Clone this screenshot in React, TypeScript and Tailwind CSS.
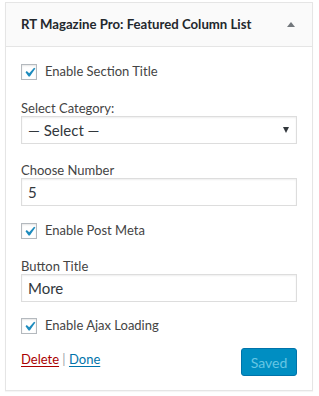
const font = { fontFamily: 'Lato, "Open Sans", sans-serif' }

function Check({ label }: { label: string }) {
  return (
    <label className="flex items-center h-4">
      <span className="relative w-4 h-4 border border-[#b4b9be] bg-white shadow-[inset_0_1px_2px_rgba(0,0,0,0.1)]">
        <svg viewBox="0 0 20 20" className="absolute -left-[2px] -top-[2px] w-[19px] h-[19px] text-[#1e8cbe]" fill="currentColor">
          <path d="M14.83 4.89l1.34.94-5.81 8.38H9.02L5.78 9.67l1.34-1.25 2.57 2.4z" />
        </svg>
      </span>
      <span className="ml-2 text-[13px] text-[#444]">{label}</span>
    </label>
  )
}

function Field({ label, value }: { label: string; value: string }) {
  return (
    <div>
      <div className="text-[13px] text-[#444] leading-4">{label}</div>
      <div className="h-7 border border-[#ddd] bg-white flex items-center px-[6px] text-[15px] text-[#32373c] shadow-[inset_0_1px_2px_rgba(0,0,0,0.07)]">
        {value}
      </div>
    </div>
  )
}

export default function App() {
  return (
    <div className="w-[319px] h-[396px] bg-white pt-[2px] pl-[5px]" style={font}>
      <div className="w-[308px] border border-[#e5e5e5] shadow-[0_1px_1px_rgba(0,0,0,0.04)]">
        {/* Header */}
        <div className="h-[44px] bg-[#fafafa] border-b border-[#e5e5e5] flex items-center justify-between pl-[15px] pr-[17px]">
          <h3 className="text-[13.2px] font-bold text-[#23282d] whitespace-nowrap">RT Magazine Pro: Featured Column List</h3>
          <span className="w-0 h-0 border-l-[4px] border-r-[4px] border-b-[5px] border-l-transparent border-r-transparent border-b-[#72777c]" />
        </div>

        {/* Body */}
        <div className="px-[15px] pt-[17px] pb-[14px]">
          <Check label="Enable Section Title" />

          <div className="mt-[20px]">
            <div className="text-[13px] text-[#444] leading-4">Select Category:</div>
            <div className="h-7 border border-[#ddd] bg-white flex items-center justify-between pl-[6px] pr-[7px] text-[15px] text-[#32373c] shadow-[inset_0_1px_2px_rgba(0,0,0,0.07)]">
              <span>— Select —</span>
              <span className="w-0 h-0 border-l-[3px] border-r-[3px] border-t-[6px] border-l-transparent border-r-transparent border-t-[#32373c]" />
            </div>
          </div>

          <div className="mt-[18px]">
            <Field label="Choose Number" value="5" />
          </div>

          <div className="mt-[17px]">
            <Check label="Enable Post Meta" />
          </div>

          <div className="mt-[19px]">
            <Field label="Button Title" value="More" />
          </div>

          <div className="mt-[16px]">
            <Check label="Enable Ajax Loading" />
          </div>

          <div className="mt-[14px] flex items-start justify-between">
            <div className="text-[13px] text-[#444] pt-[3px] leading-4">
              <span className="text-[#a00] underline underline-offset-2">Delete</span>
              <span className="text-[#a0a5aa]"> | </span>
              <span className="text-[#0073aa] underline underline-offset-2">Done</span>
            </div>
            <button className="h-7 w-[56px] rounded-[3px] bg-[#008ec2] border border-[#0073aa] text-[14px] text-[#66c6e4]">
              Saved
            </button>
          </div>
        </div>
      </div>
    </div>
  )
}
